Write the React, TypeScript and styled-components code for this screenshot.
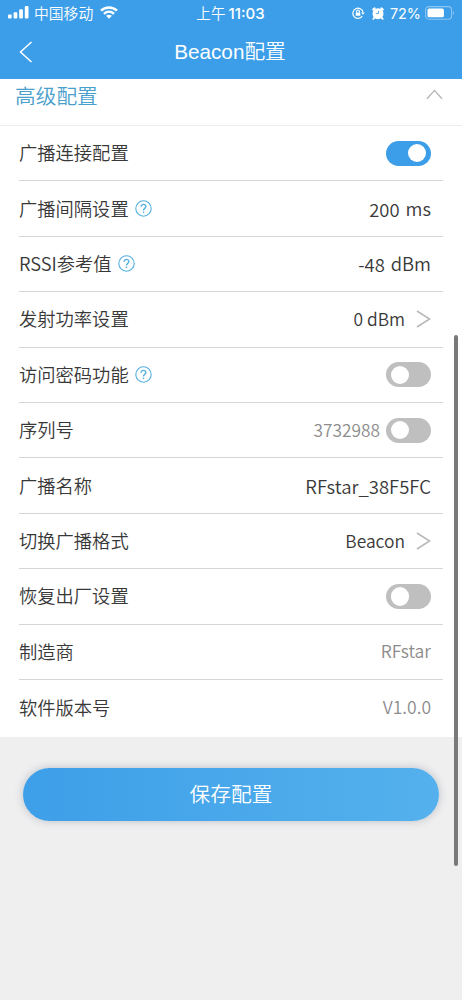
import React from "react";
import styled, { createGlobalStyle } from "styled-components";

const GlobalStyle = createGlobalStyle`
  * { box-sizing: border-box; }
  body {
    margin: 0;
    background: #efeff0;
    font-family: "Noto Sans CJK SC", sans-serif;
    font-weight: 350;
    color: #383838;
  }
`;

const Page = styled.div`
  position: relative;
  width: 462px;
  height: 1000px;
  overflow: hidden;
  background: #efeff0;
`;

const Header = styled.header`
  height: 79px;
  background: #3c9ee8;
  color: #fff;
`;

const StatusBar = styled.div`
  display: grid;
  grid-template-columns: 1fr auto 1fr;
  align-items: center;
  height: 25px;
  padding: 0 7px 0 8px;
`;

const StatusGroup = styled.div<{ $end?: boolean }>`
  display: flex;
  align-items: center;
  justify-content: ${(p) => (p.$end ? "flex-end" : "flex-start")};
`;

const Carrier = styled.span`
  margin: 0 7px 0 5px;
  padding-bottom: 2px;
  font-size: 14.8px;
  line-height: 23px;
`;

const Clock = styled.span`
  font-size: 14.6px;
  line-height: 25px;
`;

const ClockDigits = styled.span`
  margin: 0 2px 0 3px;
  font-family: Inter, sans-serif;
  font-size: 15px;
  font-weight: 500;
`;

const Percent = styled.span`
  margin: 0 4px 0 6px;
  font-family: Inter, sans-serif;
  font-size: 14.4px;
  line-height: 25px;
  font-weight: 400;
`;

const StatusIcons = styled.div`
  display: flex;
  align-items: center;
  gap: 7px;
`;

const NavBar = styled.div`
  display: grid;
  grid-template-columns: 60px 1fr 62px;
  align-items: center;
  height: 54px;
`;

const BackButton = styled.div`
  display: flex;
  padding-left: 19px;
`;

const Title = styled.h1`
  margin: 0;
  text-align: center;
  font-family: "Liberation Sans", "Noto Sans CJK SC", sans-serif;
  font-size: 20.7px;
  line-height: 54px;
  font-weight: 350;
`;

const Section = styled.div`
  display: flex;
  justify-content: space-between;
  height: 47px;
  padding: 0 19px 0 15px;
  background: #fff;
  border-bottom: 1px solid #ececec;
`;

const SectionTitle = styled.h2`
  margin: 0;
  color: #4a9fcd;
  font-size: 20.7px;
  line-height: 32px;
  font-weight: 350;
`;

const SectionArrow = styled.div`
  display: flex;
  padding-top: 10px;
`;

const List = styled.div`
  height: 611px;
  padding: 0 19px;
  background: #fff;
`;

const Row = styled.div`
  display: flex;
  align-items: center;
  justify-content: space-between;
  height: 55.4px;
  padding-right: 12px;
  border-bottom: 1px solid #d6d6d6;
  &:last-child { border-bottom: 0; }
`;

const Label = styled.div`
  display: flex;
  align-items: center;
  gap: 6px;
  font-size: 18.3px;
  line-height: 26px;
`;

const Text = styled.span`
  padding-bottom: 2px;
`;

const Value = styled.div<{ $muted?: boolean; $gap?: number; $size?: number }>`
  display: flex;
  align-items: center;
  gap: ${(p) => p.$gap ?? 6}px;
  color: ${(p) => (p.$muted ? "#8c8c8c" : "#383838")};
  font-size: ${(p) => p.$size ?? 17.5}px;
  line-height: 26px;
`;

const Track = styled.div<{ $on?: boolean }>`
  display: flex;
  align-items: center;
  justify-content: ${(p) => (p.$on ? "flex-end" : "flex-start")};
  width: 45px;
  height: 25px;
  padding: 0 5px;
  border-radius: 13px;
  background: ${(p) => (p.$on ? "#3c9ee8" : "#bfbfbf")};
`;

const Knob = styled.div`
  width: 18.4px;
  height: 18.4px;
  border-radius: 50%;
  background: #fff;
`;

const SaveButton = styled.button`
  display: block;
  width: 416px;
  height: 53px;
  margin: 31px 0 0 23px;
  padding: 0 0 3px;
  border: 0;
  border-radius: 27px;
  background: linear-gradient(90deg, #3d9fe8, #55b1ed);
  box-shadow: 0 0 9px rgba(70, 80, 100, 0.3);
  color: #fff;
  font-family: inherit;
  font-size: 20.7px;
  line-height: 50px;
  font-weight: 350;
`;

const Scrollbar = styled.div`
  position: absolute;
  top: 335px;
  left: 454px;
  width: 4px;
  height: 531px;
  border-radius: 2px;
  background: #797979;
`;

const Signal = () => (
  <svg width="21" height="14" viewBox="0 0 21 14" fill="#fff">
    <rect x="0" y="8.5" width="3.7" height="4" rx="1" />
    <rect x="5.6" y="6.3" width="3.7" height="6.2" rx="1" />
    <rect x="11.2" y="3.2" width="3.7" height="9.3" rx="1" />
    <rect x="16.8" y="0" width="3.7" height="12.5" rx="1" />
  </svg>
);

const Wifi = () => (
  <svg width="18" height="14" viewBox="0 0 18 14" fill="none" stroke="#fff" strokeWidth="2.5">
    <path d="M1 4.6C5.5 0.3 12.5 0.3 17 4.6" />
    <path d="M4 7.8C6.9 5.1 11.1 5.1 14 7.8" />
    <path d="M9 12.7L6.1 9.8C7.8 8.3 10.2 8.3 11.9 9.8Z" fill="#fff" stroke="none" />
  </svg>
);

const RotationLock = () => (
  <svg width="13" height="12" viewBox="0 0 13 12" fill="none" stroke="#fff" strokeWidth="1.2">
    <path d="M10.2 9.2A5.1 5.1 0 1 1 11 5.3" />
    <path d="M9.2 5.4H12.8L11 7.8Z" fill="#fff" stroke="none" />
    <rect x="3.7" y="5.4" width="4.6" height="3.4" rx="0.4" fill="#fff" stroke="none" />
    <path d="M4.6 5.6V4.4a1.4 1.4 0 0 1 2.8 0V5.6" />
  </svg>
);

const Alarm = () => (
  <svg width="12" height="13" viewBox="0 0 12 13" fill="none">
    <circle cx="6" cy="6.7" r="5.5" fill="#fff" />
    <path d="M1.2 2.6L2.7 1.3M10.8 2.6L9.3 1.3" stroke="#fff" strokeWidth="2" strokeLinecap="round" />
    <path d="M2.2 10.8L1.3 11.8M9.8 10.8L10.7 11.8" stroke="#fff" strokeWidth="1.8" strokeLinecap="round" />
    <path d="M6.5 3.8V6.5H3.8" stroke="#3c9ee8" strokeWidth="0.8" />
  </svg>
);

const Battery = () => (
  <svg width="30" height="14" viewBox="0 0 30 14" fill="none">
    <rect x="0.6" y="0.6" width="26" height="12.6" rx="3.4" stroke="#8cc5f1" strokeWidth="1.1" />
    <rect x="2.5" y="2.5" width="16.4" height="8.8" rx="1.6" fill="#fff" />
    <path d="M28 5V9C29.3 8.5 29.3 5.5 28 5Z" fill="#8cc5f1" />
  </svg>
);

const BackArrow = () => (
  <svg width="14" height="22" viewBox="0 0 14 22" fill="none" stroke="#fff" strokeWidth="1.5">
    <path d="M12.5 1L1.5 11L12.5 21" />
  </svg>
);

const UpArrow = () => (
  <svg width="17" height="11" viewBox="0 0 17 11" fill="none" stroke="#b4b4b4" strokeWidth="1.3">
    <path d="M1 9.8L8.5 1.4L16 9.8" />
  </svg>
);

const NextArrow = () => (
  <svg width="15" height="18" viewBox="0 0 15 18" fill="none" stroke="#b9b9b9" strokeWidth="1.6">
    <path d="M1 1L13.6 9L1 17" />
  </svg>
);

const Help = () => (
  <svg width="17" height="17" viewBox="0 0 17 17" fill="none" stroke="#56b0e0" strokeWidth="1.1">
    <circle cx="8.5" cy="8.5" r="7.7" />
    <path d="M6.1 6.8C6.1 3.5 11 3.7 10.9 6.6C10.8 8.4 8.5 8.4 8.5 10.4" strokeWidth="1.4" />
    <path d="M8.5 11.6V13.1" strokeWidth="1.4" />
  </svg>
);

const Switch = ({ on }: { on?: boolean }) => (
  <Track $on={on} role="switch" aria-checked={!!on}>
    <Knob />
  </Track>
);

export default function App() {
  return (
    <Page>
      <GlobalStyle />
      <Header>
        <StatusBar>
          <StatusGroup>
            <Signal />
            <Carrier>中国移动</Carrier>
            <Wifi />
          </StatusGroup>
          <Clock>
            上午<ClockDigits>11:03</ClockDigits>
          </Clock>
          <StatusGroup $end>
            <StatusIcons>
              <RotationLock />
              <Alarm />
            </StatusIcons>
            <Percent>72%</Percent>
            <Battery />
          </StatusGroup>
        </StatusBar>
        <NavBar>
          <BackButton><BackArrow /></BackButton>
          <Title>Beacon配置</Title>
        </NavBar>
      </Header>
      <Section>
        <SectionTitle>高级配置</SectionTitle>
        <SectionArrow><UpArrow /></SectionArrow>
      </Section>
      <List>
        <Row><Label><Text>广播连接配置</Text></Label><Switch on /></Row>
        <Row><Label><Text>广播间隔设置</Text><Help /></Label><Value $size={18.4}><span>200</span><Text>ms</Text></Value></Row>
        <Row><Label><Text>RSSI参考值</Text><Help /></Label><Value $size={18.4}><span>-48</span><Text>dBm</Text></Value></Row>
        <Row><Label><Text>发射功率设置</Text></Label><Value $gap={11} $size={17.4}><span>0 dBm</span><NextArrow /></Value></Row>
        <Row><Label><Text>访问密码功能</Text><Help /></Label><Switch /></Row>
        <Row><Label><Text>序列号</Text></Label><Value $muted $size={17.3}><span>3732988</span><Switch /></Value></Row>
        <Row><Label><Text>广播名称</Text></Label><Value $size={18.5}>RFstar_38F5FC</Value></Row>
        <Row><Label><Text>切换广播格式</Text></Label><Value $gap={11} $size={17.4}><span>Beacon</span><NextArrow /></Value></Row>
        <Row><Label><Text>恢复出厂设置</Text></Label><Switch /></Row>
        <Row><Label><Text>制造商</Text></Label><Value $muted><Text>RFstar</Text></Value></Row>
        <Row><Label><Text>软件版本号</Text></Label><Value $muted><Text>V1.0.0</Text></Value></Row>
      </List>
      <SaveButton>保存配置</SaveButton>
      <Scrollbar />
    </Page>
  );
}
